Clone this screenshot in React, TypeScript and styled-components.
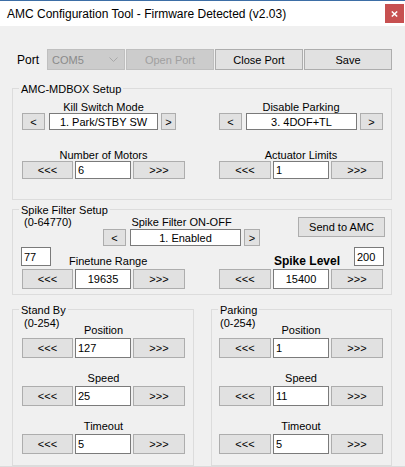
import React from "react"
import styled, { createGlobalStyle } from "styled-components"

const GlobalStyle = createGlobalStyle`
  html, body {
    margin: 0;
    padding: 0;
    background: #f0f0f0;
  }
  body {
    font-family: "Liberation Sans", Arial, sans-serif;
    font-size: 11px;
    color: #000;
  }
  * { box-sizing: border-box; }
`

const Window = styled.div`
  width: 405px;
  height: 467px;
  overflow: hidden;
  background: #f0f0f0;
  display: flex;
  flex-direction: column;
`

const TitleBar = styled.div`
  flex-shrink: 0;
  height: 26px;
  border-top: 1px solid #3d6ea6;
  background: #fff;
  display: flex;
  align-items: center;
  justify-content: space-between;
  padding: 0 1px 0 7px;
`

const TitleText = styled.span`
  font-size: 12px;
  line-height: 14px;
`

const CloseButton = styled.div`
  width: 19px;
  height: 19px;
  background: #c75050;
  display: flex;
  align-items: center;
  justify-content: center;
`

const Body = styled.div`
  flex-shrink: 0;
  padding: 23px 13px 0 12px;
  display: flex;
  flex-direction: column;
`

const BottomEdge = styled.div`
  flex-shrink: 0;
  height: 1px;
  background: #dcdcdc;
`

const PortRow = styled.div`
  display: grid;
  grid-template-columns: 29px 78px 88px 88px 88px;
  column-gap: 1px;
  height: 21px;
  padding-left: 5px;
`

const PortLabel = styled.span`
  align-self: center;
  font-size: 12px;
  line-height: 14px;
`

const Combo = styled.div`
  display: flex;
  align-items: center;
  justify-content: space-between;
  padding: 0 6px 0 4px;
  border: 1px solid #bfbfbf;
  background: #cccccc;
  color: #8a8a8a;
`

const Button = styled.button<{ $w?: number; $h?: number }>`
  width: ${p => (p.$w ? `${p.$w}px` : "auto")};
  height: ${p => (p.$h ? `${p.$h}px` : "auto")};
  margin: 0;
  padding: 0;
  font-family: inherit;
  font-size: 11px;
  color: #000;
  background: #e1e1e1;
  border: 1px solid #adadad;
  border-radius: 0;
  line-height: 12px;

  &:disabled {
    background: #cccccc;
    border-color: #bfbfbf;
    color: #a0a0a0;
  }
`

const TextBox = styled.input<{ $w?: number; $h?: number; $center?: boolean }>`
  width: ${p => (p.$w ? `${p.$w}px` : "auto")};
  height: ${p => (p.$h ? `${p.$h}px` : "100%")};
  min-width: 0;
  margin: 0;
  padding: 0 2px;
  border: 1px solid #7a7a7a;
  border-radius: 0;
  background: #fff;
  font-family: inherit;
  font-size: 11px;
  color: #000;
  text-align: ${p => (p.$center ? "center" : "left")};
  outline: none;
`

const Group = styled.div<{ $pad: string; $h?: number }>`
  position: relative;
  border: 1px solid #dcdcdc;
  padding: ${p => p.$pad};
  height: ${p => (p.$h ? `${p.$h}px` : "auto")};
`

const Caption = styled.span`
  position: absolute;
  top: -6px;
  left: 6px;
  padding: 0 2px;
  background: #f0f0f0;
  line-height: 12px;
`

const TwoCols = styled.div<{ $gap?: number }>`
  display: grid;
  grid-template-columns: 163px 164px;
  column-gap: 34px;
  row-gap: ${p => p.$gap ?? 0}px;
`

const Field = styled.div`
  display: flex;
  flex-direction: column;
  align-items: flex-start;
`

const FieldLabel = styled.div<{ $lh?: number; $mb?: number }>`
  align-self: stretch;
  text-align: center;
  line-height: ${p => p.$lh ?? 11}px;
  margin-bottom: ${p => p.$mb ?? 0}px;
  white-space: nowrap;
`

const Selector = styled.div<{ $h: number }>`
  display: flex;
  height: ${p => p.$h}px;

  & > input {
    margin: 0 3px 0 4px;
  }
`

const Stepper = styled.div<{ $lw: number; $h: number }>`
  display: grid;
  grid-template-columns: ${p => p.$lw}px 56px 52px;
  column-gap: 2px;
  height: ${p => p.$h}px;
`

/* spike filter parts */

const SpikeTop = styled.div`
  display: grid;
  grid-template-columns: 81px 157px 1fr;
  height: 30px;
`

const RangeNote = styled.span<{ $indent?: number }>`
  justify-self: start;
  align-self: start;
  margin-left: ${p => p.$indent ?? 2}px;
  line-height: 12px;
`

const OnOff = styled.div`
  display: flex;
  flex-direction: column;
  padding-top: 1px;

  & > div:last-child {
    margin-top: 1px;
  }
`

const SendButton = styled(Button)`
  justify-self: end;
  margin: 1px -2px 0 0;
`

const SpikeMid = styled(TwoCols)`
  height: 20px;
  margin-top: 1px;
`

const FineCell = styled.div`
  display: flex;
  align-items: flex-end;

  & > input {
    align-self: flex-start;
    margin-left: -1px;
  }
`

const FineLabel = styled.span`
  margin-left: 18px;
  line-height: 12px;
`

const LevelCell = styled.div`
  display: flex;
  justify-content: flex-end;
  align-items: flex-end;

  & > input {
    align-self: flex-start;
    margin-right: -1px;
  }
`

const LevelLabel = styled.span`
  font-size: 12px;
  font-weight: bold;
  line-height: 12px;
  margin-right: 14px;
`

const SpikeBottom = styled(TwoCols)`
  margin-top: 2px;
`

/* stand by / parking */

const BottomPair = styled.div`
  display: grid;
  grid-template-columns: 182px 181px;
  column-gap: 17px;
  margin-top: 14px;
`

const FieldStack = styled.div`
  display: flex;
  flex-direction: column;
  gap: 13px;
`

const FieldHead = styled.div`
  display: grid;
  align-self: stretch;
  height: 21px;

  & > * {
    grid-area: 1 / 1;
  }
`

const HeadLabel = styled.span`
  justify-self: center;
  align-self: end;
  line-height: 14px;
  margin-bottom: 1px;
`

const Chevron = () => (
  <svg width="9" height="5" viewBox="0 0 9 5">
    <path d="M0.5 0.5L4.5 4.5L8.5 0.5" fill="none" stroke="#a8a8a8" strokeWidth="1" />
  </svg>
)

type StepProps = { lw: number; h: number; value: string; center?: boolean }

const StepControl = ({ lw, h, value, center }: StepProps) => (
  <Stepper $lw={lw} $h={h}>
    <Button>{"<<<"}</Button>
    <TextBox readOnly defaultValue={value} $center={center} />
    <Button>{">>>"}</Button>
  </Stepper>
)

type PosGroupProps = {
  title: string
  pad: string
  lw: number
  indent: number
  values: string[]
}

const PositionGroup = ({ title, pad, lw, indent, values }: PosGroupProps) => (
  <Group $pad={pad} $h={157}>
    <Caption>{title}</Caption>
    <FieldStack>
      <Field>
        <FieldHead>
          <RangeNote $indent={indent}>(0-254)</RangeNote>
          <HeadLabel>Position</HeadLabel>
        </FieldHead>
        <StepControl lw={lw} h={20} value={values[0]} />
      </Field>
      <Field>
        <FieldLabel $lh={14} $mb={1}>Speed</FieldLabel>
        <StepControl lw={lw} h={20} value={values[1]} />
      </Field>
      <Field>
        <FieldLabel $lh={14} $mb={1}>Timeout</FieldLabel>
        <StepControl lw={lw} h={20} value={values[2]} />
      </Field>
    </FieldStack>
  </Group>
)

export default function App() {
  return (
    <>
      <GlobalStyle />
      <Window>
        <TitleBar>
          <TitleText>AMC Configuration Tool - Firmware Detected (v2.03)</TitleText>
          <CloseButton>
            <svg width="7" height="6" viewBox="0 0 7 6">
              <path d="M0.8 0.5L6.2 5.5M6.2 0.5L0.8 5.5" stroke="#fff" strokeWidth="1.5" />
            </svg>
          </CloseButton>
        </TitleBar>

        <Body>
          <PortRow>
            <PortLabel>Port</PortLabel>
            <Combo>
              <span>COM5</span>
              <Chevron />
            </Combo>
            <Button disabled>Open Port</Button>
            <Button>Close Port</Button>
            <Button>Save</Button>
          </PortRow>

          <Group $pad="13px 8px 20px 9px" style={{ marginTop: 18 }}>
            <Caption>AMC-MDBOX Setup</Caption>
            <TwoCols $gap={20}>
              <Field>
                <FieldLabel>Kill Switch Mode</FieldLabel>
                <Selector $h={17}>
                  <Button $w={23}>{"<"}</Button>
                  <TextBox readOnly defaultValue="1. Park/STBY SW" $w={109} $center />
                  <Button $w={15}>{">"}</Button>
                </Selector>
              </Field>
              <Field>
                <FieldLabel>Disable Parking</FieldLabel>
                <Selector $h={17}>
                  <Button $w={23}>{"<"}</Button>
                  <TextBox readOnly defaultValue="3. 4DOF+TL" $w={111} $center />
                  <Button $w={23}>{">"}</Button>
                </Selector>
              </Field>
              <Field>
                <FieldLabel>Number of Motors</FieldLabel>
                <StepControl lw={51} h={18} value="6" />
              </Field>
              <Field>
                <FieldLabel>Actuator Limits</FieldLabel>
                <StepControl lw={52} h={18} value="1" />
              </Field>
            </TwoCols>
          </Group>

          <Group $pad="6px 8px 5px 9px" style={{ marginTop: 9 }}>
            <Caption>Spike Filter Setup</Caption>
            <SpikeTop>
              <RangeNote>(0-64770)</RangeNote>
              <OnOff>
                <FieldLabel>Spike Filter ON-OFF</FieldLabel>
                <Selector $h={17}>
                  <Button $w={23}>{"<"}</Button>
                  <TextBox readOnly defaultValue="1. Enabled" $w={111} $center />
                  <Button $w={16}>{">"}</Button>
                </Selector>
              </OnOff>
              <SendButton $w={87} $h={20}>Send to AMC</SendButton>
            </SpikeTop>
            <SpikeMid>
              <FineCell>
                <TextBox readOnly defaultValue="77" $w={30} $h={19} />
                <FineLabel>Finetune Range</FineLabel>
              </FineCell>
              <LevelCell>
                <LevelLabel>Spike Level</LevelLabel>
                <TextBox readOnly defaultValue="200" $w={30} $h={19} />
              </LevelCell>
            </SpikeMid>
            <SpikeBottom>
              <StepControl lw={51} h={20} value="19635" center />
              <StepControl lw={52} h={20} value="15400" center />
            </SpikeBottom>
          </Group>

          <BottomPair>
            <PositionGroup title="Stand By" pad="7px 8px 0 9px" lw={51} indent={2} values={["127", "25", "5"]} />
            <PositionGroup title="Parking" pad="7px 8px 0 7px" lw={52} indent={1} values={["1", "11", "5"]} />
          </BottomPair>
        </Body>
        <BottomEdge />
      </Window>
    </>
  )
}
